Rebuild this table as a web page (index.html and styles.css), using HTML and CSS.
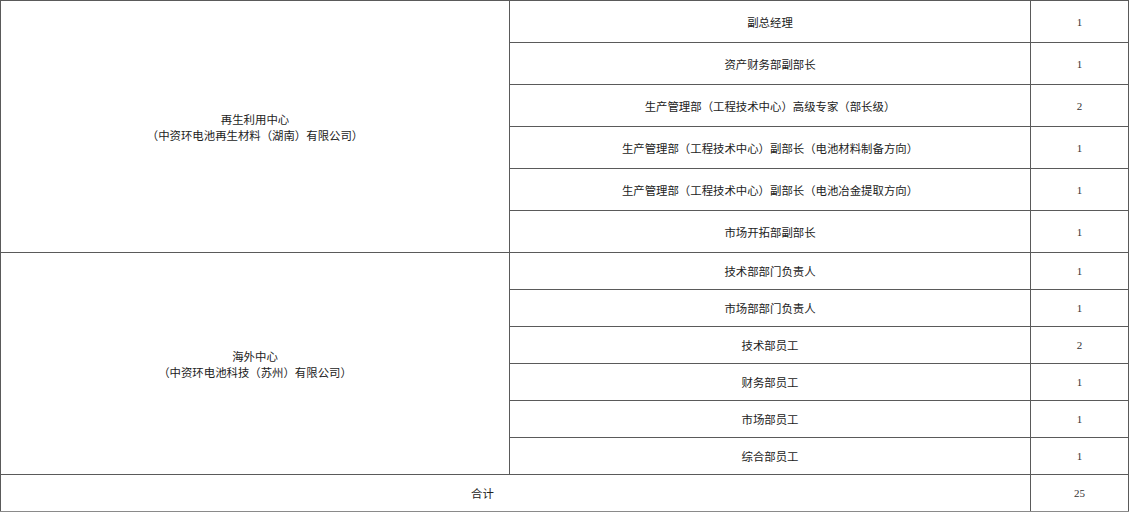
FILE: index.html
```html
<!DOCTYPE html>
<html lang="zh-CN">
<head>
<meta charset="utf-8">
<title>岗位表</title>
<link rel="stylesheet" href="styles.css">
</head>
<body>
<table class="grid">
  <colgroup>
    <col class="c-unit">
    <col class="c-post">
    <col class="c-num">
  </colgroup>
  <tbody>
    <tr class="tall">
      <td rowspan="6" class="unit">再生利用中心<br>（中资环电池再生材料（湖南）有限公司）</td>
      <td>副总经理</td>
      <td class="num">1</td>
    </tr>
    <tr class="tall"><td>资产财务部副部长</td><td class="num">1</td></tr>
    <tr class="tall"><td>生产管理部（工程技术中心）高级专家（部长级）</td><td class="num">2</td></tr>
    <tr class="tall"><td>生产管理部（工程技术中心）副部长（电池材料制备方向）</td><td class="num">1</td></tr>
    <tr class="tall"><td>生产管理部（工程技术中心）副部长（电池冶金提取方向）</td><td class="num">1</td></tr>
    <tr class="tall"><td>市场开拓部副部长</td><td class="num">1</td></tr>
    <tr class="short">
      <td rowspan="6" class="unit">海外中心<br>（中资环电池科技（苏州）有限公司）</td>
      <td>技术部部门负责人</td>
      <td class="num">1</td>
    </tr>
    <tr class="short"><td>市场部部门负责人</td><td class="num">1</td></tr>
    <tr class="short"><td>技术部员工</td><td class="num">2</td></tr>
    <tr class="short"><td>财务部员工</td><td class="num">1</td></tr>
    <tr class="short"><td>市场部员工</td><td class="num">1</td></tr>
    <tr class="short"><td>综合部员工</td><td class="num">1</td></tr>
    <tr class="short total">
      <td colspan="2" class="total-label">合计</td>
      <td class="num">25</td>
    </tr>
  </tbody>
</table>
</body>
</html>
```

FILE: styles.css
```css
html, body {
  margin: 0;
  padding: 0;
  background: #ffffff;
}

body {
  font-family: "Noto Sans CJK SC", "Noto Sans", sans-serif;
  font-size: 11.4px;
  color: #222222;
}

.grid {
  border-collapse: collapse;
  table-layout: fixed;
  width: 1128px;
}

.c-unit { width: 509px; }
.c-post { width: 521px; }
.c-num { width: 98px; }

.grid td {
  border: 1px solid #5a5a5a;
  padding: 0;
  text-align: center;
  vertical-align: middle;
  line-height: 16px;
}

.grid tr.tall td { height: 41px; }
.grid tr.short td { height: 36px; }

.grid td.unit {
  height: auto;
}

.grid td.num {
  font-family: "Liberation Serif", "DejaVu Serif", serif;
  font-size: 11px;
  color: #333333;
}

.grid td.total-label {
  padding-right: 66px;
}

.grid tr.total td {
  border-bottom-color: #8a8a8a;
}
```
